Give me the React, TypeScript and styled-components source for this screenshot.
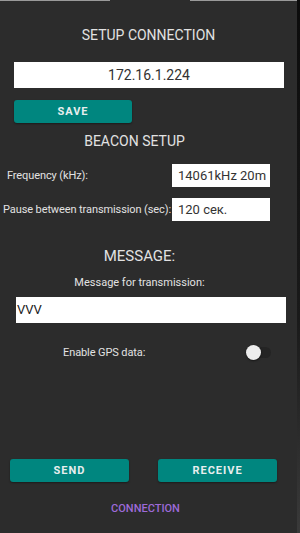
import { createGlobalStyle, styled } from "styled-components"

const Global = createGlobalStyle`
  html, body {
    margin: 0;
    padding: 0;
    background: #2c2c2c;
  }
  * { box-sizing: border-box; }
`

export default function App() {
  return (
    <>
      <Global />
      <Screen>
        <TopEdge>
          <EdgeLine $w={110} />
          <EdgeGap />
          <EdgeLine $w={107} />
        </TopEdge>
        <Content>
          <Title $top={25}>SETUP CONNECTION</Title>
          <IpField>172.16.1.224</IpField>
          <SaveRow>
            <Button $w={118}>SAVE</Button>
          </SaveRow>
          <Title $top={9} $shift={-14}>BEACON SETUP</Title>
          <FieldRow $top={14} $left={7}>
            <Label>Frequency (kHz):</Label>
            <SmallField>14061kHz 20m</SmallField>
          </FieldRow>
          <FieldRow $top={11} $left={3}>
            <Label>Pause between transmission (sec):</Label>
            <SmallField>120 сек.</SmallField>
          </FieldRow>
          <Title $top={26} $shift={-9} $size={15}>MESSAGE:</Title>
          <SubLabel>Message for transmission:</SubLabel>
          <MessageField>VVV</MessageField>
          <SwitchRow>
            <Label>Enable GPS data:</Label>
            <Switch>
              <Track />
              <Thumb />
            </Switch>
          </SwitchRow>
          <Spacer />
          <ButtonRow>
            <Button $w={119}>SEND</Button>
            <Button $w={119}>RECEIVE</Button>
          </ButtonRow>
          <LinkText>CONNECTION</LinkText>
        </Content>
        <RightEdge />
      </Screen>
    </>
  )
}

const Screen = styled.div`
  position: relative;
  width: 300px;
  height: 533px;
  background: #2c2c2c;
  font-family: Roboto, "Liberation Sans", Arial, sans-serif;
  overflow: hidden;
  display: flex;
  flex-direction: column;
`

const TopEdge = styled.div`
  display: flex;
  height: 1px;
  width: 297px;
`

const EdgeLine = styled.div<{ $w: number }>`
  width: ${p => p.$w}px;
  background: #9a9a9a;
`

const EdgeGap = styled.div`
  flex: 1;
`

const RightEdge = styled.div`
  position: absolute;
  top: 0;
  right: 0;
  width: 3px;
  height: 100%;
  background: linear-gradient(#0c0c0c, #1a1a1a 60%, #3a3a3a);
`

const Content = styled.div`
  flex: 1;
  width: 297px;
  display: flex;
  flex-direction: column;
`

const Title = styled.div<{ $top: number; $shift?: number; $size?: number }>`
  margin-top: ${p => p.$top}px;
  text-align: center;
  transform: translateX(${p => p.$shift ?? 0}px);
  color: #e2e2e2;
  font-size: ${p => p.$size ?? 14}px;
  line-height: 18px;
`

const IpField = styled.div`
  margin: 18px 0 0 14px;
  width: 270px;
  height: 26px;
  background: #fff;
  color: #333;
  font-size: 14px;
  line-height: 26px;
  text-align: center;
`

const SaveRow = styled.div`
  margin: 12px 0 0 14px;
  display: flex;
`

const Button = styled.div<{ $w: number }>`
  width: ${p => p.$w}px;
  height: 23px;
  background: #00867f;
  border-radius: 3px;
  color: #e8eeee;
  font-size: 11px;
  font-weight: 700;
  letter-spacing: 1px;
  line-height: 23px;
  text-align: center;
  box-shadow: 0 1px 2px rgba(0, 0, 0, 0.4);
`

const FieldRow = styled.div<{ $top: number; $left: number }>`
  margin: ${p => p.$top}px 0 0 ${p => p.$left}px;
  display: grid;
  grid-template-columns: 1fr 98px;
  align-items: center;
  width: ${p => 270 - p.$left}px;
`

const Label = styled.div`
  color: #e2e2e2;
  font-size: 11px;
  white-space: nowrap;
  letter-spacing: -0.1px;
`

const SmallField = styled.div`
  width: 98px;
  height: 23px;
  background: #fff;
  color: #333;
  font-size: 13px;
  line-height: 23px;
  padding-left: 6px;
  white-space: nowrap;
  overflow: hidden;
`

const SubLabel = styled.div`
  margin-top: 11px;
  text-align: center;
  transform: translateX(-9px);
  color: #e2e2e2;
  font-size: 11px;
`

const MessageField = styled.div`
  margin: 8px 0 0 16px;
  width: 270px;
  height: 26px;
  background: #fff;
  color: #222;
  font-size: 13px;
  line-height: 26px;
  padding-left: 1px;
`

const SwitchRow = styled.div`
  margin: 22px 0 0 63px;
  width: 208px;
  display: flex;
  align-items: center;
  justify-content: space-between;
`

const Switch = styled.div`
  position: relative;
  width: 25px;
  height: 15px;
`

const Track = styled.div`
  position: absolute;
  left: 4px;
  top: 2px;
  width: 21px;
  height: 11px;
  border-radius: 6px;
  background: #242424;
`

const Thumb = styled.div`
  position: absolute;
  left: 0;
  top: 0;
  width: 15px;
  height: 15px;
  border-radius: 50%;
  background: #eeeeee;
  box-shadow: 0 1px 2px rgba(0, 0, 0, 0.5);
`

const Spacer = styled.div`
  flex: 1;
`

const ButtonRow = styled.div`
  margin-left: 10px;
  width: 267px;
  display: flex;
  justify-content: space-between;
`

const LinkText = styled.div`
  margin: 20px 0 17px;
  text-align: center;
  transform: translateX(-3px);
  color: #9d6ad8;
  font-size: 11px;
  font-weight: 500;
  line-height: 14px;
`
